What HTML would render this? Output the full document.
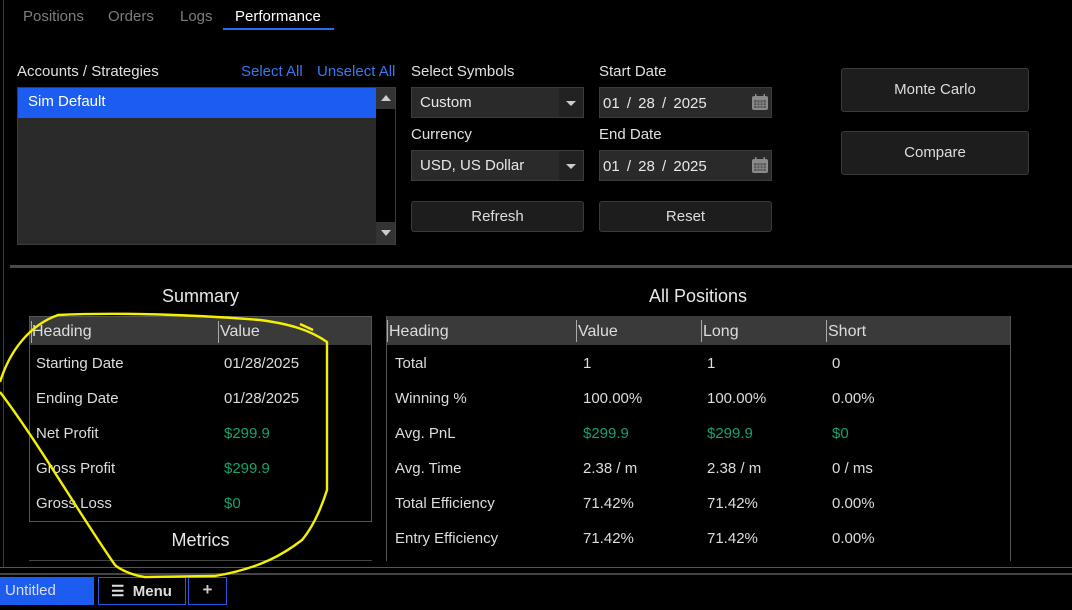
<!DOCTYPE html>
<html><head><meta charset="utf-8"><style>
*{box-sizing:border-box;margin:0;padding:0}
body{width:1072px;height:610px;background:#000;position:relative;overflow:hidden;font-family:"Segoe UI","Liberation Sans",sans-serif;color:#e8e8e8;font-size:15px}
.a{position:absolute;white-space:nowrap}
.tab{font-size:15px;color:#7d7d7d;top:8px}
.lbl{font-size:15px;color:#e0e0e0}
.box{position:absolute;background:#2a2a2a;border:1px solid #3c3c3c}
.btn{position:absolute;background:#1d1d1d;border:1px solid #3a3a3a;border-radius:3px;text-align:center;color:#ddd;font-size:15px}
.hdr{position:absolute;background:#3a3a3a;height:28px}
.vd{position:absolute;top:4px;width:1px;height:22px;background:#aaa}
.row{position:absolute;font-size:15px;color:#ddd}
.row.g{color:#13a36b}
</style></head><body>
<div class="a" style="left:3px;top:0;width:1px;height:568px;background:#3a3a3a"></div>
<div class="a tab" style="left:23px">Positions</div>
<div class="a tab" style="left:108px">Orders</div>
<div class="a tab" style="left:180px">Logs</div>
<div class="a tab" style="left:235px;color:#fff">Performance</div>
<div class="a" style="left:223px;top:28px;width:111px;height:2px;background:#2a6cf0"></div>

<div class="a lbl" style="left:17px;top:63px">Accounts / Strategies</div>
<div class="a lbl" style="left:241px;top:63px;color:#3a78f2">Select All</div>
<div class="a lbl" style="left:317px;top:63px;color:#3a78f2">Unselect All</div>
<div class="box" style="left:17px;top:87px;width:379px;height:158px;background:#2a2a2a"></div>
<div class="a" style="left:18px;top:88px;width:358px;height:30px;background:#1c5cf0"></div>
<div class="a" style="left:28px;top:93px;color:#fff;font-size:15px">Sim Default</div>
<div class="a" style="left:376px;top:88px;width:19px;height:156px;background:#000"></div>
<div class="a" style="left:376px;top:88px;width:19px;height:21px;background:#333"></div>
<div class="a" style="left:376px;top:222px;width:19px;height:22px;background:#333"></div>
<div class="a" style="left:381px;top:95px;width:0;height:0;border-left:5px solid transparent;border-right:5px solid transparent;border-bottom:6px solid #ccc"></div>
<div class="a" style="left:381px;top:230px;width:0;height:0;border-left:5px solid transparent;border-right:5px solid transparent;border-top:6px solid #ccc"></div>

<div class="a lbl" style="left:411px;top:63px">Select Symbols</div>
<div class="box" style="left:411px;top:87px;width:173px;height:31px"></div>
<div class="a" style="left:559px;top:88px;width:24px;height:29px;background:#222"></div>
<div class="a" style="left:566px;top:101px;border-left:5px solid transparent;border-right:5px solid transparent;border-top:5px solid #ccc"></div>
<div class="a" style="left:420px;top:94px;font-size:15px">Custom</div>
<div class="a lbl" style="left:411px;top:126px">Currency</div>
<div class="box" style="left:411px;top:150px;width:173px;height:31px"></div>
<div class="a" style="left:559px;top:151px;width:24px;height:29px;background:#222"></div>
<div class="a" style="left:566px;top:164px;border-left:5px solid transparent;border-right:5px solid transparent;border-top:5px solid #ccc"></div>
<div class="a" style="left:420px;top:157px;font-size:15px">USD, US Dollar</div>

<div class="a lbl" style="left:599px;top:63px">Start Date</div>
<div class="box" style="left:599px;top:87px;width:173px;height:31px"></div>
<div class="a" style="left:603px;top:95px;font-size:15px;word-spacing:3px">01 / 28 / 2025</div>
<div class="a lbl" style="left:599px;top:126px">End Date</div>
<div class="box" style="left:599px;top:150px;width:173px;height:31px"></div>
<div class="a" style="left:603px;top:158px;font-size:15px;word-spacing:3px">01 / 28 / 2025</div>
<svg class="a" style="left:750px;top:92px" width="20" height="20" viewBox="0 0 20 20"><rect x="2" y="4" width="16" height="14" rx="2" fill="#8a8a8a"/><rect x="4" y="8" width="12" height="8" fill="#5a5a5a"/><path d="M4 11h12M4 13.5h12M7 8v8M10 8v8M13 8v8" stroke="#8a8a8a" stroke-width="0.8"/><rect x="5" y="2" width="1.5" height="4" fill="#8a8a8a"/><rect x="13.5" y="2" width="1.5" height="4" fill="#8a8a8a"/></svg>
<svg class="a" style="left:750px;top:155px" width="20" height="20" viewBox="0 0 20 20"><rect x="2" y="4" width="16" height="14" rx="2" fill="#8a8a8a"/><rect x="4" y="8" width="12" height="8" fill="#5a5a5a"/><path d="M4 11h12M4 13.5h12M7 8v8M10 8v8M13 8v8" stroke="#8a8a8a" stroke-width="0.8"/><rect x="5" y="2" width="1.5" height="4" fill="#8a8a8a"/><rect x="13.5" y="2" width="1.5" height="4" fill="#8a8a8a"/></svg>

<div class="btn" style="left:411px;top:201px;width:173px;height:31px;line-height:29px">Refresh</div>
<div class="btn" style="left:599px;top:201px;width:173px;height:31px;line-height:29px">Reset</div>
<div class="btn" style="left:841px;top:68px;width:188px;height:44px;line-height:42px">Monte Carlo</div>
<div class="btn" style="left:841px;top:131px;width:188px;height:44px;line-height:42px">Compare</div>

<div class="a" style="left:10px;top:265px;width:1062px;height:3px;background:#4a4a4a"></div>

<div class="a" style="left:29px;top:286px;width:343px;text-align:center;font-size:18px">Summary</div>
<div class="a" style="left:29px;top:316px;width:343px;height:206px;border:1px solid #555"></div>
<div class="hdr" style="left:30px;top:317px;width:341px"></div>
<div class="vd" style="left:31px;top:321px"></div><div class="vd" style="left:218px;top:321px"></div>
<div class="row" style="left:32px;top:323px;font-size:16px">Heading</div>
<div class="row" style="left:220px;top:323px;font-size:16px">Value</div>
<div class="row" style="left:36px;top:355px">Starting Date</div><div class="row" style="left:224px;top:355px">01/28/2025</div>
<div class="row" style="left:36px;top:390px">Ending Date</div><div class="row" style="left:224px;top:390px">01/28/2025</div>
<div class="row" style="left:36px;top:425px">Net Profit</div><div class="row g" style="left:224px;top:425px">$299.9</div>
<div class="row" style="left:36px;top:460px">Gross Profit</div><div class="row g" style="left:224px;top:460px">$299.9</div>
<div class="row" style="left:36px;top:495px">Gross Loss</div><div class="row g" style="left:224px;top:495px">$0</div>
<div class="a" style="left:29px;top:530px;width:343px;text-align:center;font-size:18px">Metrics</div>
<div class="a" style="left:29px;top:560px;width:343px;height:1px;background:#444"></div>

<div class="a" style="left:386px;top:286px;width:624px;text-align:center;font-size:18px">All Positions</div>
<div class="a" style="left:386px;top:316px;width:625px;height:245px;border-left:1px solid #555;border-right:1px solid #555"></div>
<div class="hdr" style="left:387px;top:316px;width:623px;height:29px"></div>
<div class="vd" style="left:387px;top:320px"></div><div class="vd" style="left:576px;top:320px"></div><div class="vd" style="left:701px;top:320px"></div><div class="vd" style="left:826px;top:320px"></div>
<div class="row" style="left:389px;top:323px;font-size:16px">Heading</div>
<div class="row" style="left:578px;top:323px;font-size:16px">Value</div>
<div class="row" style="left:703px;top:323px;font-size:16px">Long</div>
<div class="row" style="left:828px;top:323px;font-size:16px">Short</div>
<div class="row" style="left:395px;top:355px">Total</div><div class="row" style="left:583px;top:355px">1</div><div class="row" style="left:707px;top:355px">1</div><div class="row" style="left:832px;top:355px">0</div>
<div class="row" style="left:395px;top:390px">Winning %</div><div class="row" style="left:583px;top:390px">100.00%</div><div class="row" style="left:707px;top:390px">100.00%</div><div class="row" style="left:832px;top:390px">0.00%</div>
<div class="row" style="left:395px;top:425px">Avg. PnL</div><div class="row g" style="left:583px;top:425px">$299.9</div><div class="row g" style="left:707px;top:425px">$299.9</div><div class="row g" style="left:832px;top:425px">$0</div>
<div class="row" style="left:395px;top:460px">Avg. Time</div><div class="row" style="left:583px;top:460px">2.38 / m</div><div class="row" style="left:707px;top:460px">2.38 / m</div><div class="row" style="left:832px;top:460px">0 / ms</div>
<div class="row" style="left:395px;top:495px">Total Efficiency</div><div class="row" style="left:583px;top:495px">71.42%</div><div class="row" style="left:707px;top:495px">71.42%</div><div class="row" style="left:832px;top:495px">0.00%</div>
<div class="row" style="left:395px;top:530px">Entry Efficiency</div><div class="row" style="left:583px;top:530px">71.42%</div><div class="row" style="left:707px;top:530px">71.42%</div><div class="row" style="left:832px;top:530px">0.00%</div>

<div class="a" style="left:0;top:567px;width:1072px;height:1px;background:#555"></div>
<div class="a" style="left:0;top:573px;width:1072px;height:2px;background:#444"></div>
<div class="a" style="left:0;top:577px;width:94px;height:28px;background:#1c5cf0"></div>
<div class="a" style="left:5px;top:582px;font-size:15px;color:#dde">Untitled</div>
<div class="a" style="left:98px;top:577px;width:88px;height:28px;border:1px solid #2458e0"></div>
<div class="a" style="left:111px;top:582px;font-size:15px;font-weight:bold;color:#ddd">☰&nbsp; Menu</div>
<div class="a" style="left:188px;top:577px;width:39px;height:28px;border:1px solid #2458e0;text-align:center;font-weight:bold;font-size:17px;color:#ccc;line-height:24px">+</div>

<svg class="a" style="left:0;top:0" width="1072" height="610"><path d="M0,382 C10,350 30,325 58,315 C120,312 200,315 260,320 C290,324 310,330 327,342 L327,490 C320,512 312,528 302,540 C285,553 262,568 215,576 L145,577 C130,575 118,568 115,565 C80,515 40,445 0,392" fill="none" stroke="#f5f000" stroke-width="2.4"/><path d="M300,324 L313,330" stroke="#f5f000" stroke-width="2.4"/></svg>
</body></html>
